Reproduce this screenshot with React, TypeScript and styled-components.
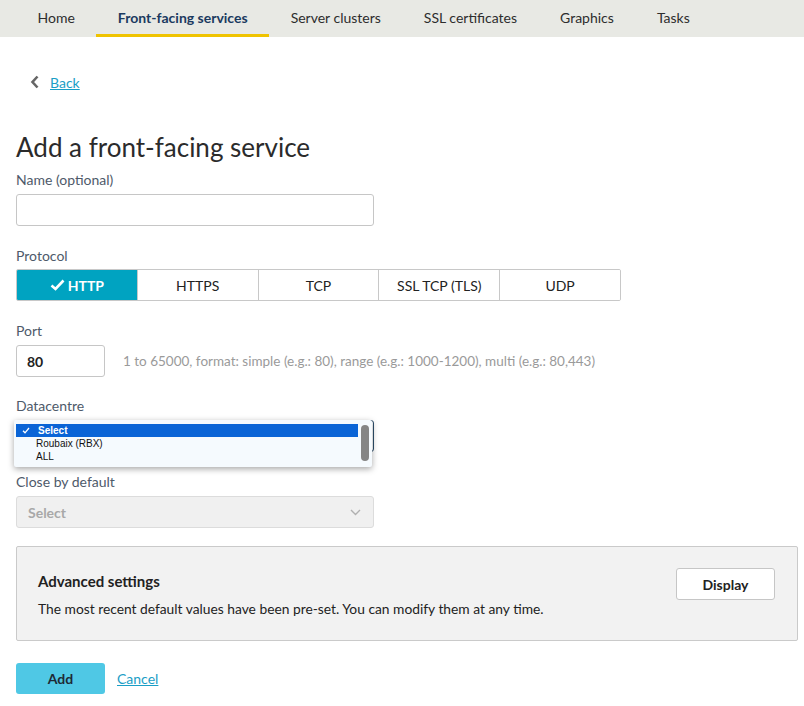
import React from "react";
import styled, { createGlobalStyle } from "styled-components";

const Global = createGlobalStyle`
  body { margin: 0; background: #fff; font-family: Lato, "Open Sans", sans-serif; color: #333; }
  * { box-sizing: border-box; }
`;

const Nav = styled.nav`
  display: flex;
  height: 37px;
  background: #e8e9e4;
  padding-left: 16px;
`;

const Tab = styled.div<{ $active?: boolean }>`
  padding: 0 21.5px;
  height: 37px;
  font-size: 14px;
  font-weight: ${(p) => (p.$active ? 700 : 400)};
  color: ${(p) => (p.$active ? "#1b3a60" : "#2d2d2d")};
  border-bottom: 3px solid ${(p) => (p.$active ? "#efc300" : "transparent")};
  line-height: 36px;
`;

const Main = styled.main`
  padding: 0 6px 0 16px;
`;

const BackRow = styled.div`
  display: flex;
  align-items: center;
  gap: 11px;
  margin-top: 35px;
  padding-left: 14px;
  height: 20px;
`;

const Link = styled.a`
  color: #1a9ec6;
  text-decoration: underline;
  font-size: 14px;
  cursor: pointer;
`;

const Title = styled.h1`
  margin: 38px 0 0;
  font-size: 26px;
  font-weight: 400;
  line-height: 34px;
  color: #2b2b2b;
`;

const Field = styled.div<{ $mt: number }>`
  display: flex;
  flex-direction: column;
  gap: 4px;
  margin-top: ${(p) => p.$mt}px;
`;

const Label = styled.label`
  font-size: 14px;
  line-height: 20px;
  color: #4e5a6a;
`;

const Input = styled.input<{ $w: number }>`
  width: ${(p) => p.$w}px;
  height: 32px;
  border: 1px solid #c6c6c6;
  border-radius: 3px;
  padding: 0 10px;
  font-family: Lato, sans-serif;
  font-size: 14px;
  font-weight: 700;
  color: #222;
  outline: none;
`;

const Segmented = styled.div`
  display: flex;
  width: 605px;
  height: 32px;
  margin-top: -1px;
  border: 1px solid #c8c8c8;
  border-radius: 2px;
  overflow: hidden;
`;

const Seg = styled.div<{ $on?: boolean }>`
  flex: 1;
  display: flex;
  align-items: center;
  justify-content: center;
  gap: 3px;
  font-size: 14px;
  font-weight: ${(p) => (p.$on ? 700 : 400)};
  color: ${(p) => (p.$on ? "#fff" : "#222")};
  background: ${(p) => (p.$on ? "#00a3c1" : "#fff")};
  & + & { border-left: 1px solid #c8c8c8; }
`;

const Row = styled.div`
  display: flex;
  align-items: center;
  gap: 18px;
`;

const Help = styled.span`
  font-size: 13.5px;
  color: #9a9a9a;
`;

const SelectWrap = styled.div`
  position: relative;
  width: 358px;
  height: 32px;
`;

const SelectBox = styled.div<{ $disabled?: boolean }>`
  display: flex;
  align-items: center;
  justify-content: space-between;
  width: 358px;
  height: 32px;
  padding: 0 12px 0 11px;
  border: 1px solid ${(p) => (p.$disabled ? "#dcdcdc" : "#2d4f6c")};
  border-radius: 3px;
  background: ${(p) => (p.$disabled ? "#f0f0f0" : "#fff")};
  font-size: 14px;
  font-weight: 700;
  color: ${(p) => (p.$disabled ? "#a8a8a8" : "#222")};
`;

const Popup = styled.div`
  position: absolute;
  left: -2px;
  top: 0;
  width: 358px;
  height: 47px;
  background: #f5fafe;
  box-shadow: 0 2px 6px rgba(0, 0, 0, 0.35);
  border-radius: 2px;
  padding: 4px 0 0 2px;
  display: flex;
  font-family: "Liberation Sans", Arial, sans-serif;
  font-size: 10px;
`;

const Options = styled.div`
  flex: 1;
  display: flex;
  flex-direction: column;
`;

const Option = styled.div<{ $sel?: boolean }>`
  height: 13px;
  line-height: 12px;
  padding-left: ${(p) => (p.$sel ? 6 : 20)}px;
  display: flex;
  gap: 8px;
  align-items: center;
  background: ${(p) => (p.$sel ? "#0a64d6" : "transparent")};
  color: ${(p) => (p.$sel ? "#fff" : "#111")};
  font-weight: ${(p) => (p.$sel ? 700 : 400)};
`;

const Scroll = styled.div`
  width: 14px;
  padding: 1px 3px 6px 3px;
  display: flex;
`;

const Thumb = styled.div`
  flex: 1;
  background: #858585;
  border-radius: 4px;
`;

const Advanced = styled.section`
  display: flex;
  justify-content: space-between;
  align-items: flex-start;
  margin-top: 18px;
  height: 95px;
  padding: 21px 22px 0 21px;
  background: #f2f2f2;
  border: 1px solid #cacaca;
  border-radius: 2px;
`;

const AdvTitle = styled.div`
  margin-top: 3px;
  font-size: 15px;
  line-height: 20px;
  font-weight: 700;
  color: #222;
`;

const AdvText = styled.div`
  margin-top: 8px;
  font-size: 13.8px;
  line-height: 20px;
  color: #222;
`;

const GhostButton = styled.button`
  width: 99px;
  height: 32px;
  background: #fff;
  border: 1px solid #c6c6c6;
  border-radius: 3px;
  font-family: Lato, sans-serif;
  font-size: 14px;
  font-weight: 700;
  color: #222;
`;

const Actions = styled.div`
  display: flex;
  align-items: center;
  gap: 12px;
  margin-top: 22px;
`;

const PrimaryButton = styled.button`
  width: 89px;
  height: 31px;
  background: #4fc8e5;
  border: none;
  border-radius: 3px;
  font-family: Lato, sans-serif;
  font-size: 14px;
  font-weight: 700;
  color: #1e2a36;
`;

const tabs = ["Home", "Front-facing services", "Server clusters", "SSL certificates", "Graphics", "Tasks"];
const protocols = ["HTTP", "HTTPS", "TCP", "SSL TCP (TLS)", "UDP"];

export default function App() {
  return (
    <>
      <Global />
      <Nav>
        {tabs.map((t) => (
          <Tab key={t} $active={t === "Front-facing services"}>{t}</Tab>
        ))}
      </Nav>
      <Main>
        <BackRow>
          <svg width="9" height="14" viewBox="0 0 9 14">
            <path d="M7.5 1.5 L2.5 7 L7.5 12.5" fill="none" stroke="#666" strokeWidth="2.6" />
          </svg>
          <Link>Back</Link>
        </BackRow>
        <Title>Add a front-facing service</Title>
        <Field $mt={6}>
          <Label>Name (optional)</Label>
          <Input $w={358} />
        </Field>
        <Field $mt={20}>
          <Label>Protocol</Label>
          <Segmented>
            {protocols.map((p, i) => (
              <Seg key={p} $on={i === 0}>
                {i === 0 && (
                  <svg width="15" height="12" viewBox="0 0 15 12">
                    <path d="M1.5 6.5 L5.5 10 L13.5 1.5" fill="none" stroke="#fff" strokeWidth="2.6" />
                  </svg>
                )}
                {p}
              </Seg>
            ))}
          </Segmented>
        </Field>
        <Field $mt={20}>
          <Label>Port</Label>
          <Row>
            <Input $w={89} defaultValue="80" />
            <Help>1 to 65000, format: simple (e.g.: 80), range (e.g.: 1000-1200), multi (e.g.: 80,443)</Help>
          </Row>
        </Field>
        <Field $mt={19}>
          <Label>Datacentre</Label>
          <SelectWrap>
            <SelectBox />
            <Popup>
              <Options>
                <Option $sel>
                  <svg width="8" height="7" viewBox="0 0 8 7">
                    <path d="M1 3.8 L3 5.8 L7 1" fill="none" stroke="#fff" strokeWidth="1.3" />
                  </svg>
                  <span>Select</span>
                </Option>
                <Option>Roubaix (RBX)</Option>
                <Option>ALL</Option>
              </Options>
              <Scroll>
                <Thumb />
              </Scroll>
            </Popup>
          </SelectWrap>
        </Field>
        <Field $mt={20}>
          <Label>Close by default</Label>
          <SelectBox $disabled>
            Select
            <svg width="11" height="7" viewBox="0 0 11 7">
              <path d="M1 1 L5.5 5.5 L10 1" fill="none" stroke="#b0b0b0" strokeWidth="1.4" />
            </svg>
          </SelectBox>
        </Field>
        <Advanced>
          <div>
            <AdvTitle>Advanced settings</AdvTitle>
            <AdvText>The most recent default values have been pre-set. You can modify them at any time.</AdvText>
          </div>
          <GhostButton>Display</GhostButton>
        </Advanced>
        <Actions>
          <PrimaryButton>Add</PrimaryButton>
          <Link>Cancel</Link>
        </Actions>
      </Main>
    </>
  );
}
